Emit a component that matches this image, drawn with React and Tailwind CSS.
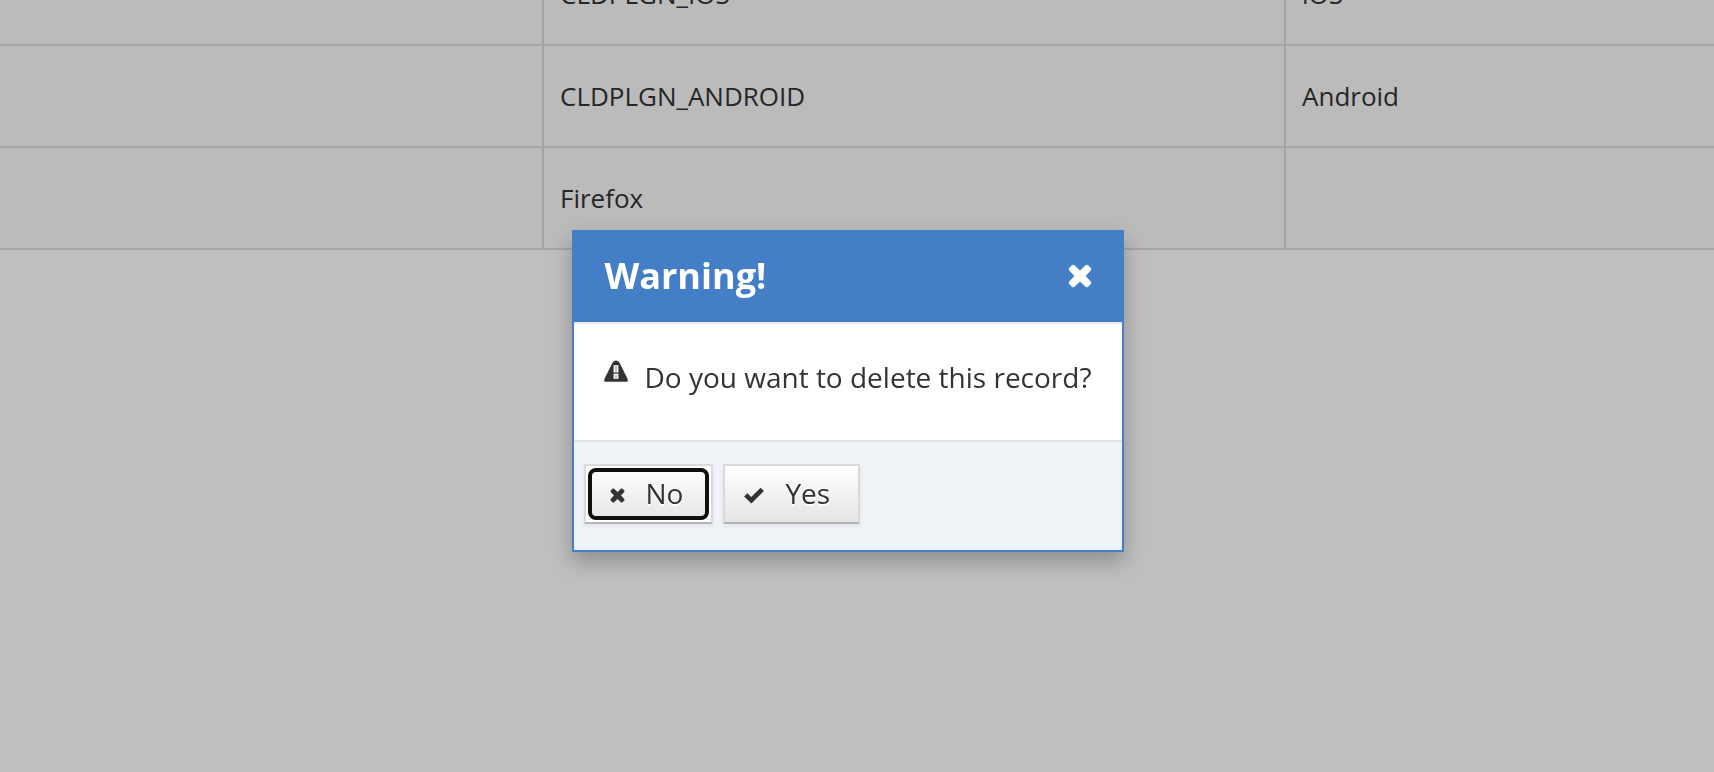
const rows = [
  ["", "CLDPLGN_IOS", "iOS"],
  ["", "CLDPLGN_ANDROID", "Android"],
  ["", "Firefox", ""],
];

function CrossIcon({ className }) {
  return (
    <svg viewBox="0 0 24 24" className={className} aria-hidden="true">
      <path
        d="M6.5 1.2 12 6.4l5.5-5.2q1.3-1 2.6 0l2.7 2.7q1 1.3 0 2.6L17.6 12l5.2 5.5q1 1.3 0 2.6l-2.7 2.7q-1.3 1-2.6 0L12 17.6l-5.5 5.2q-1.3 1-2.6 0l-2.7-2.7q-1-1.3 0-2.6L6.4 12 1.2 6.5q-1-1.3 0-2.6l2.7-2.7q1.3-1 2.6 0Z"
        fill="currentColor"
      />
    </svg>
  );
}

function WarningIcon({ className }) {
  return (
    <svg viewBox="0 0 24 22" className={className} aria-hidden="true">
      <path
        fillRule="evenodd"
        fill="currentColor"
        d="M8.6 2.6Q12-1.6 15.4 2.6L23.4 18.5Q24.6 21.8 22.5 21.8H1.5Q-.6 21.8.6 18.5ZM9.6 5.2V12.4H14.4V5.2ZM9.6 13.8V18.8H14.4V13.8Z"
      />
      <path fill="currentColor" fillOpacity="0.3" d="M11 6H13V12H11ZM11 15H13V18H11Z" />
    </svg>
  );
}

function CheckIcon({ className }) {
  return (
    <svg viewBox="0 0 22 18" className={className} aria-hidden="true">
      <path d="M0.5 10 4 6.5 8 10.5 18 .8 21.5 4.3 8.3 17.5Z" fill="currentColor" />
    </svg>
  );
}

const buttonClass =
  "flex h-[60px] items-center border-2 border-[#dadada] border-b-[#b4b4b4] bg-linear-to-b from-white to-[#e5e5e5] pb-0.5 text-[28px] leading-[38px] text-[#333333] shadow-[0_2px_4px_rgba(0,0,0,0.06)] [text-shadow:0_2px_0_#ffffff]";

export default function App() {
  return (
    <div className="min-h-screen overflow-hidden bg-[#bfbfbf] font-['Open_Sans','Noto_Sans',sans-serif]">
      <table className="-mt-14 w-full table-fixed border-separate border-spacing-0 bg-[#bbbbbb] text-[26px] leading-9 text-[#262626]">
        <colgroup>
          <col className="w-[544px]" />
          <col className="w-[742px]" />
          <col />
        </colgroup>
        <tbody>
          {rows.map((row) => (
            <tr key={row[1]} className="h-[102px]">
              {row.map((cell, i) => (
                <td key={i} className="border-r-2 border-b-2 border-[#a5a5a5] px-4 py-0 last:border-r-0">
                  {cell}
                </td>
              ))}
            </tr>
          ))}
        </tbody>
      </table>

      <div className="fixed inset-0 flex items-center justify-center pt-[10px] pr-[18px]">
        <div
          role="alertdialog"
          aria-labelledby="dialog-title"
          aria-describedby="dialog-message"
          className="border-2 border-[#447ec7] bg-white text-[#333333] shadow-[0_10px_20px_rgba(0,0,0,0.25)]"
        >
          <header className="flex h-[90px] items-center justify-between bg-[#447ec7] pr-[30px] pb-0.5 pl-[30px] text-white">
            <h2 id="dialog-title" className="text-[36px] leading-[50px] font-bold">
              Warning!
            </h2>
            <button type="button" aria-label="Close">
              <CrossIcon className="size-6" />
            </button>
          </header>
          <div className="flex h-[118px] items-start border-t-2 border-[#ededed] px-[30px] pt-[34px]">
            <WarningIcon className="mt-0.5 h-[22px] w-6" />
            <p id="dialog-message" className="pl-4 text-[28px] leading-[38px]">
              Do you want to delete this record?
            </p>
          </div>
          <footer className="flex h-[110px] gap-[10px] border-t-2 border-[#e3e5e9] bg-[#eff2f7] px-[10px] pt-[22px]">
            <button type="button" className={buttonClass + " relative pr-7 pl-6"}>
              <span className="absolute inset-0 border-2 border-white">
                <span className="block h-full rounded-lg border-4 border-[#101010] shadow-[0_0_0_2px_#ffffff]" />
              </span>
              <CrossIcon className="mt-1 mr-5 size-[15px]" />
              No
            </button>
            <button type="button" className={buttonClass + " pr-7 pl-[18px]"}>
              <CheckIcon className="mt-1 mr-5 h-[17px] w-[22px]" />
              Yes
            </button>
          </footer>
        </div>
      </div>
    </div>
  );
}
